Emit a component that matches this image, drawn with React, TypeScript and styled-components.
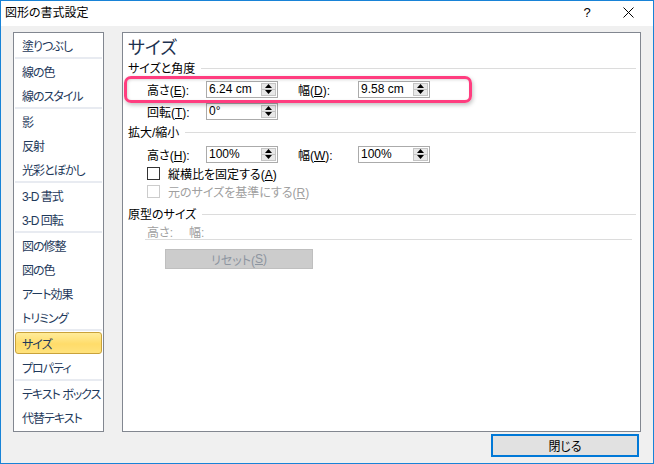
import React from "react";
import styled, { createGlobalStyle } from "styled-components";

const GlobalStyle = createGlobalStyle`
  html, body {
    margin: 0;
    padding: 0;
    background: #ffffff;
  }
  body {
    font-family: "Liberation Sans", "Noto Sans CJK JP", sans-serif;
    font-size: 12px;
    color: #000000;
    font-feature-settings: "palt";
  }
`;

type NavEntry = { label: string; group: number };

const navItems: NavEntry[] = [
  { label: "塗りつぶし", group: 0 },
  { label: "線の色", group: 1 },
  { label: "線のスタイル", group: 1 },
  { label: "影", group: 2 },
  { label: "反射", group: 2 },
  { label: "光彩とぼかし", group: 2 },
  { label: "3-D 書式", group: 3 },
  { label: "3-D 回転", group: 3 },
  { label: "図の修整", group: 4 },
  { label: "図の色", group: 4 },
  { label: "アート効果", group: 4 },
  { label: "トリミング", group: 4 },
  { label: "サイズ", group: 5 },
  { label: "プロパティ", group: 5 },
  { label: "テキスト ボックス", group: 6 },
  { label: "代替テキスト", group: 6 },
];

const Spinner: React.FC<{ value: string }> = ({ value }) => (
  <SpinBox>
    <SpinValue>{value}</SpinValue>
    <SpinButtons>
      <SpinArrow>
        <svg width="7" height="4" viewBox="0 0 7 4">
          <path d="M0 4 L3.5 0 L7 4 Z" fill="#000" />
        </svg>
      </SpinArrow>
      <SpinArrow $bottom>
        <svg width="7" height="4" viewBox="0 0 7 4">
          <path d="M0 0 L3.5 4 L7 0 Z" fill="#000" />
        </svg>
      </SpinArrow>
    </SpinButtons>
  </SpinBox>
);

const App: React.FC = () => {
  return (
    <>
      <GlobalStyle />
      <Window>
        <TitleBar>
          <Title>図形の書式設定</Title>
          <TitleButtons>
            <HelpMark>?</HelpMark>
            <CloseMark>
              <svg width="11" height="11" viewBox="0 0 11 11">
                <path d="M0.5 0.5 L10.5 10.5 M10.5 0.5 L0.5 10.5" stroke="#000" strokeWidth="1" />
              </svg>
            </CloseMark>
          </TitleButtons>
        </TitleBar>
        <Body>
          <Panes>
            <NavList>
              {navItems.map((item, i) => (
                <React.Fragment key={item.label}>
                  {i > 0 && navItems[i - 1].group !== item.group && <NavSeparator />}
                  <NavItem $selected={item.label === "サイズ"}>{item.label}</NavItem>
                </React.Fragment>
              ))}
            </NavList>
            <ContentPane>
              <Heading>サイズ</Heading>
              <SectionHeader>
                <span>サイズと角度</span>
                <SectionLine />
              </SectionHeader>
              <FieldRow $top={3}>
                <FieldLabel>
                  高さ(<u>E</u>):
                </FieldLabel>
                <Spinner value="6.24 cm" />
                <FieldLabel $second>
                  幅(<u>D</u>):
                </FieldLabel>
                <Spinner value="9.58 cm" />
              </FieldRow>
              <FieldRow>
                <FieldLabel>
                  回転(<u>T</u>):
                </FieldLabel>
                <Spinner value="0°" />
              </FieldRow>
              <SectionHeader $top={1}>
                <span>拡大/縮小</span>
                <SectionLine />
              </SectionHeader>
              <FieldRow $top={5} $height={20}>
                <FieldLabel>
                  高さ(<u>H</u>):
                </FieldLabel>
                <Spinner value="100%" />
                <FieldLabel $second>
                  幅(<u>W</u>):
                </FieldLabel>
                <Spinner value="100%" />
              </FieldRow>
              <CheckRow>
                <CheckBox />
                <span>
                  縦横比を固定する(<u>A</u>)
                </span>
              </CheckRow>
              <CheckRow $disabled>
                <CheckBox $disabled />
                <span>
                  元のサイズを基準にする(<u>R</u>)
                </span>
              </CheckRow>
              <SectionHeader $top={5}>
                <span>原型のサイズ</span>
                <SectionLine />
              </SectionHeader>
              <OriginalRow>
                <span>高さ:</span>
                <span>幅:</span>
              </OriginalRow>
              <RuleLine />
              <ResetButton>
                リセット(<u>S</u>)
              </ResetButton>
              <Highlight />
            </ContentPane>
          </Panes>
          <Footer>
            <DialogButton>閉じる</DialogButton>
          </Footer>
        </Body>
      </Window>
    </>
  );
};

export default App;

const Window = styled.div`
  width: 654px;
  height: 464px;
  box-sizing: border-box;
  border: 1px solid #1883d7;
  display: flex;
  flex-direction: column;
  background: #f0f0f0;
  font-family: "Liberation Sans", "Noto Sans CJK JP", sans-serif;
`;

const TitleBar = styled.div`
  height: 25px;
  background: #ffffff;
  display: flex;
  align-items: center;
  justify-content: space-between;
  padding-left: 4px;
`;

const Title = styled.div`
  font-size: 12px;
  line-height: 16px;
  margin-top: -2px;
`;

const TitleButtons = styled.div`
  display: flex;
  align-items: center;
  margin-top: -2px;
`;

const HelpMark = styled.div`
  width: 20px;
  text-align: center;
  font-size: 13px;
  margin-right: 26px;
`;

const CloseMark = styled.div`
  width: 11px;
  height: 11px;
  display: flex;
  margin-right: 19px;
`;

const Body = styled.div`
  flex: 1;
  display: flex;
  flex-direction: column;
  padding: 6px 12px 0 12px;
`;

const Panes = styled.div`
  display: flex;
  gap: 18px;
  height: 400px;
`;

const NavList = styled.div`
  width: 91px;
  box-sizing: border-box;
  background: #ffffff;
  border: 1px solid #828790;
  display: flex;
  flex-direction: column;
`;

const NavSeparator = styled.div`
  height: 2px;
  margin: 0 1px;
  background: #e8ebf1;
`;

const NavItem = styled.div<{ $selected?: boolean }>`
  height: 22px;
  margin: 1px 1px;
  padding-left: 6px;
  display: flex;
  align-items: center;
  box-sizing: border-box;
  white-space: nowrap;
  font-size: 12px;
  letter-spacing: -1px;
  color: #1e395b;
  border-radius: 3px;
  border: 1px solid ${({ $selected }) => ($selected ? "#c9a23a" : "transparent")};
  background: ${({ $selected }) =>
    $selected ? "linear-gradient(#ffec9a, #ffdc6a 55%, #ffe27c)" : "transparent"};
`;

const ContentPane = styled.div`
  position: relative;
  flex: 1;
  box-sizing: border-box;
  background: #ffffff;
  border: 1px solid #828790;
  padding: 4px 4px 0 5px;
  display: flex;
  flex-direction: column;
`;

const Heading = styled.div`
  height: 22px;
  line-height: 22px;
  font-size: 18px;
  color: #1e3250;
`;

const SectionHeader = styled.div<{ $top?: number }>`
  height: 16px;
  margin-top: ${({ $top }) => $top ?? 0}px;
  display: flex;
  align-items: center;
  font-size: 12px;
  white-space: nowrap;
`;

const SectionLine = styled.div`
  flex: 1;
  height: 1px;
  background: #dcdcdc;
  margin-left: 6px;
  margin-top: 2px;
`;

const FieldRow = styled.div<{ $top?: number; $height?: number }>`
  height: ${({ $height }) => $height ?? 22}px;
  margin-top: ${({ $top }) => $top ?? 0}px;
  padding-left: 19px;
  display: flex;
  align-items: center;
`;

const FieldLabel = styled.div<{ $second?: boolean }>`
  width: ${({ $second }) => ($second ? 60 : 59)}px;
  margin-left: ${({ $second }) => ($second ? 20 : 0)}px;
  font-size: 12px;
  white-space: nowrap;
`;

const SpinBox = styled.div`
  width: 72px;
  height: 17px;
  box-sizing: border-box;
  border: 1px solid #ababab;
  display: flex;
  align-items: stretch;
  background: #ffffff;
`;

const SpinValue = styled.div`
  flex: 1;
  padding-left: 2px;
  font-size: 12px;
  line-height: 15px;
  white-space: nowrap;
`;

const SpinButtons = styled.div`
  width: 15px;
  margin: 1px 1px 1px 0;
  box-sizing: border-box;
  border: 1px solid #c4c4c4;
  background: #e8e8e8;
  display: flex;
  flex-direction: column;
`;

const SpinArrow = styled.div<{ $bottom?: boolean }>`
  flex: 1;
  display: flex;
  align-items: center;
  justify-content: center;
  border-top: ${({ $bottom }) => ($bottom ? "1px solid #c4c4c4" : "none")};
`;

const CheckRow = styled.div<{ $disabled?: boolean }>`
  height: 18px;
  padding-left: 19px;
  display: flex;
  align-items: center;
  gap: 8px;
  font-size: 12px;
  color: ${({ $disabled }) => ($disabled ? "#a0a0a0" : "#000000")};
  white-space: nowrap;
`;

const CheckBox = styled.div<{ $disabled?: boolean }>`
  width: 13px;
  height: 13px;
  box-sizing: border-box;
  border: 1px solid ${({ $disabled }) => ($disabled ? "#cccccc" : "#333333")};
  background: #ffffff;
`;

const OriginalRow = styled.div`
  height: 16px;
  margin-top: 2px;
  padding-left: 19px;
  display: flex;
  align-items: center;
  gap: 16px;
  font-size: 12px;
  color: #a0a0a0;
`;

const RuleLine = styled.div`
  height: 1px;
  margin: 0 4px 0 17px;
  background: #dcdcdc;
`;

const ResetButton = styled.div`
  width: 148px;
  height: 20px;
  margin: 9px 0 0 37px;
  box-sizing: border-box;
  border: 1px solid #bfbfbf;
  background: #cccccc;
  color: #8c95a0;
  font-size: 12px;
  display: flex;
  align-items: center;
  justify-content: center;
`;

const Highlight = styled.div`
  position: absolute;
  left: 1px;
  top: 43px;
  width: 348px;
  height: 27px;
  box-sizing: border-box;
  border: 3px solid #ff3d7f;
  border-radius: 7px;
  box-shadow: 1px 2px 4px rgba(0, 0, 0, 0.25), inset 1px 1px 3px rgba(0, 0, 0, 0.15);
  pointer-events: none;
`;

const Footer = styled.div`
  display: flex;
  justify-content: flex-end;
  padding: 2px 2px 0 0;
`;

const DialogButton = styled.div`
  width: 148px;
  height: 23px;
  box-sizing: border-box;
  border: 2px solid #0078d7;
  background: #e1e1e1;
  font-size: 12px;
  display: flex;
  align-items: center;
  justify-content: center;
`;
